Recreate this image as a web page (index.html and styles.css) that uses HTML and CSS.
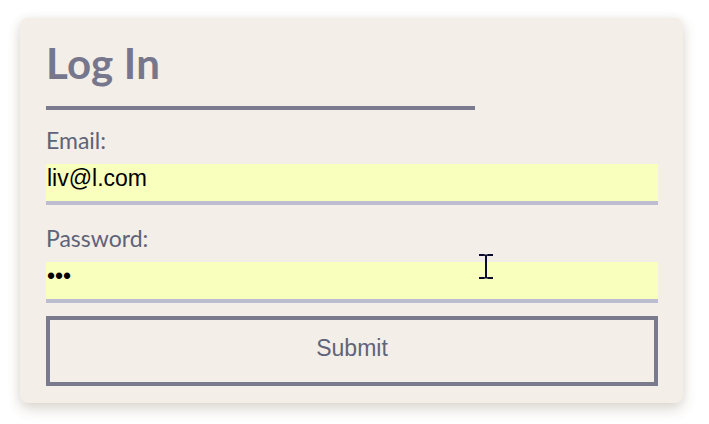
FILE: index.html
```html
<!DOCTYPE html>
<html lang="en">
<head>
<meta charset="utf-8">
<title>Log In</title>
<link rel="stylesheet" href="styles.css">
</head>
<body>
<form class="card">
  <h1 class="title">Log In</h1>
  <div class="rule"></div>
  <label class="label" for="email">Email:</label>
  <input class="field" id="email" type="email" value="liv@l.com">
  <label class="label label-pw" for="pw">Password:</label>
  <input class="field" id="pw" type="password" value="abc">
  <button class="submit" type="button">Submit</button>
  <svg class="ibeam" width="14" height="25" viewBox="0 0 14 25" aria-hidden="true">
    <path d="M0 1h5.5M8.5 1H14M7 1v23M0 24h5.5M8.5 24H14" stroke="#0b0b2e" stroke-width="2" fill="none"/>
    <path d="M5 1.2h4M5 23.8h4" stroke="#0b0b2e" stroke-width="1.2" fill="none"/>
  </svg>
</form>
</body>
</html>
```
FILE: styles.css
```css
html, body {
  margin: 0;
  padding: 0;
  background: #ffffff;
}
html {
  height: 100%;
}
body {
  box-sizing: border-box;
  min-height: 100%;
  padding: 18px 0 0 20px;
}
.card {
  position: relative;
  box-sizing: border-box;
  width: 663px;
  height: 385px;
  margin: 0;
  padding: 20px 25px 17px 26px;
  background: #f3eee7;
  border-radius: 8px;
  box-shadow: 0 6px 14px rgba(90, 65, 30, 0.2), 0 0 10px rgba(0, 0, 0, 0.05);
  display: flex;
  flex-direction: column;
  font-family: Lato, "Open Sans", sans-serif;
}
.title {
  margin: 0;
  font-family: Lato, sans-serif;
  font-weight: 700;
  font-size: 42px;
  line-height: 50px;
  color: #76778d;
  letter-spacing: 0.2px;
}
.rule {
  width: 429px;
  height: 4px;
  margin-top: 18px;
  background: #7b7b8f;
}
.label {
  display: block;
  margin-top: 16px;
  font-size: 23px;
  line-height: 28px;
  color: #5e6379;
}
.label-pw {
  margin-top: 19px;
}
.field {
  display: block;
  box-sizing: border-box;
  width: 612px;
  height: 41px;
  margin: 10px 0 0;
  padding: 0 1px 8px;
  border: none;
  border-bottom: 4px solid #bdbdd1;
  border-radius: 0;
  background: #f9ffbd;
  font-family: "Liberation Sans", Arial, sans-serif;
  font-size: 23px;
  line-height: 29px;
  color: #000000;
  outline: none;
}
.submit {
  box-sizing: border-box;
  width: 612px;
  height: 71px;
  margin-top: 13px;
  padding: 0 0 4px;
  border: 4px solid #7a7a8e;
  border-radius: 0;
  background: transparent;
  font-family: "Liberation Sans", Arial, sans-serif;
  font-size: 23px;
  color: #5f6479;
}
.ibeam {
  position: absolute;
  left: 459px;
  top: 236px;
}
```
